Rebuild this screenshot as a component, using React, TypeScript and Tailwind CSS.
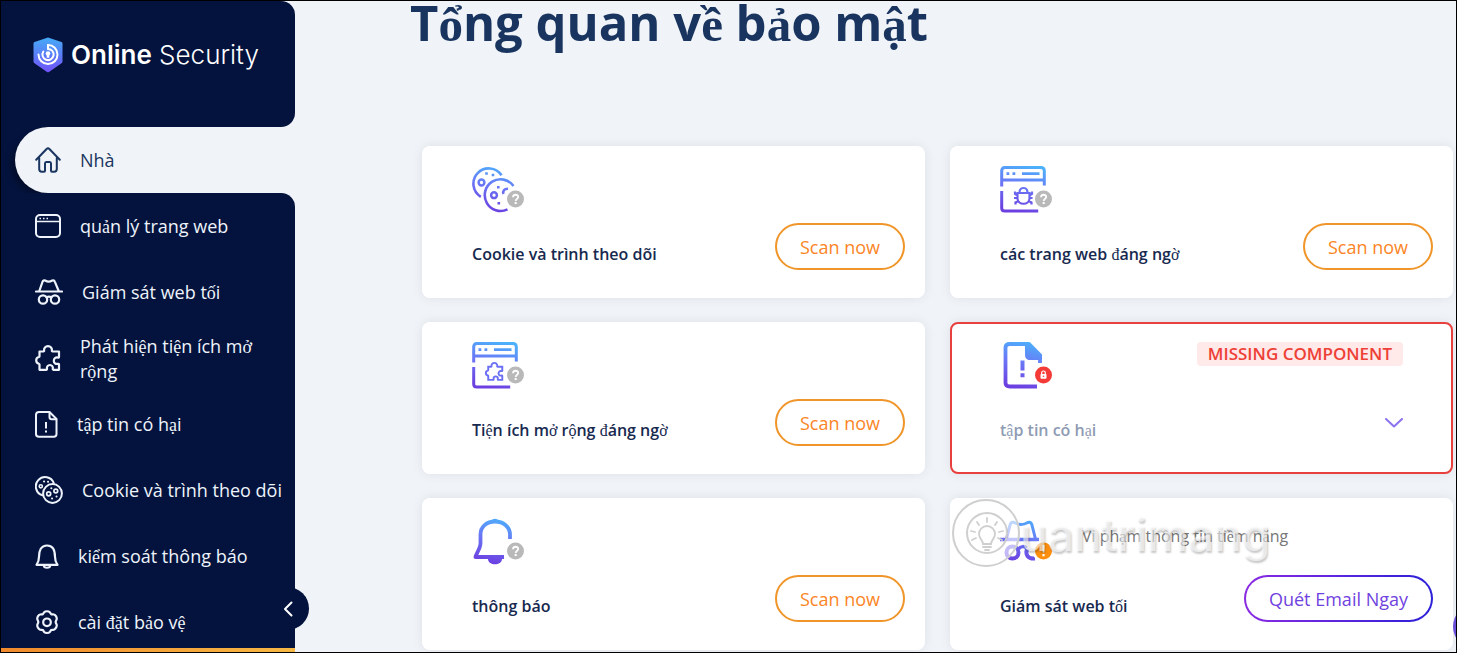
import { Fragment, type ReactNode } from "react";

const SERIF_GLYPHS = /([\u1EA0-\u1EF9đĐơƠưƯăĂ]+)/;

/** Sets the stacked Vietnamese letters in the serif face, the rest in the parent's face. */
function Vi({ children, light = false }: { children: string; light?: boolean }) {
  return (
    <>
      {children.split(SERIF_GLYPHS).map((part, i) =>
        i % 2 === 1 ? (
          <span
            key={i}
            className={
              light
                ? "leading-[0] font-normal font-['Liberation_Serif',serif]"
                : "leading-[0] font-['Liberation_Serif',serif]"
            }
          >
            {part}
          </span>
        ) : (
          <Fragment key={i}>{part}</Fragment>
        ),
      )}
    </>
  );
}

/* ---------- sidebar icons ---------- */

const line = {
  fill: "none",
  stroke: "currentColor",
  strokeWidth: 2,
  strokeLinecap: "round" as const,
  strokeLinejoin: "round" as const,
};

const PUZZLE =
  "M4.5 6.500H8.500c.4 0 .7-.4.6-.9C8.700 3.200 10.500 1.200 13 1.200s4.300 2 3.900 4.400c-.1.500.2.900.6.900h6.500v5.500c0 .5-.4.700-.9.600-2.600-.6-4.300.9-4.300 3.100s1.700 3.700 4.300 3.100c.5-.1.900.1.900.6v5.400h-5.600c-.5 0-.7-.4-.6-.9.5-2.200-.9-3.900-2.900-3.900s-3.400 1.700-2.900 3.900c.1.500-.1.900-.6.900H4.500v-5.300c0-.4-.2-.7-.6-.8C2.200 18.300 1.200 17 1.200 15.300s1-3 2.700-3.300c.4-.1.600-.4.600-.8z";

const HomeIcon = () => (
  <svg width="26" height="26" viewBox="0 0 26 26" {...line} className="shrink-0">
    <path d="M1.200 12.800 11.600 2c.8-.8 2-.8 2.800 0l10.400 10.800M4.200 11v11c0 1.500 1 2.700 2.600 2.700H9c.7 0 1-.4 1-1V16.500c0-1 .4-1.500 1.300-1.500h3.400c.9 0 1.300.5 1.300 1.500v7.200c0 .6.300 1 1 1h2.200c1.600 0 2.600-1.200 2.600-2.700V11" />
  </svg>
);
const WindowIcon = () => (
  <svg width="26" height="24" viewBox="0 0 26 24" {...line} className="shrink-0">
    <rect x="1" y="1" width="24" height="22" rx="4" />
    <path d="M1 7.500h24" strokeWidth="1.500" />
    <path d="M4.500 4.400h1.500M8 4.400h1.500M11.500 4.400H13" strokeWidth="1.500" strokeLinecap="butt" />
  </svg>
);
const SpyIcon = () => (
  <svg width="28" height="26" viewBox="0 0 28 26" {...line} strokeWidth={2.2} className="shrink-0">
    <path d="M1 12.500h26M4.300 12 7.500 2.800c.4-1.200 1.500-1.700 2.700-1.300 2.500 1.600 4.500 1.600 7 0 1.200-.4 2.300.1 2.700 1.300L23.700 12M11.500 18.500c1.500-1 3.500-1 5 0" />
    <circle cx="8" cy="20.500" r="4.200" />
    <circle cx="20" cy="20.500" r="4.200" />
  </svg>
);
const PuzzleIcon = () => (
  <svg width="26" height="27" viewBox="0 0 26 27" {...line} strokeWidth={2.2} className="shrink-0">
    <path d={PUZZLE} />
  </svg>
);
const FileIcon = () => (
  <svg width="23" height="27" viewBox="0 0 23 27" {...line} className="shrink-0">
    <path d="M4 1h10.500L21.500 8v15c0 1.700-1 2.800-2.700 2.800H4c-1.700 0-3-1.100-3-2.800V3.800C1 2.100 2.300 1 4 1z" />
    <path d="M14.500 1.500V6c0 1.500.7 2.200 2.200 2.200h4.500" />
    <path d="M11 11v6.500M11 19.500v2" strokeWidth="2" strokeLinecap="butt" />
  </svg>
);
const CookieIcon = () => (
  <svg width="28" height="28" viewBox="0 0 28 28" {...line} className="shrink-0">
    <path d="M7.500 19.300A9.300 9.300 0 1 1 18.800 7" />
    <circle cx="17.500" cy="17.500" r="9.400" />
    <circle cx="13.700" cy="17.800" r="2" strokeWidth="1.700" />
    <circle cx="20.800" cy="15" r="1.900" strokeWidth="1.700" />
    <circle cx="5.800" cy="10.300" r="1.600" strokeWidth="1.600" />
    <path d="M9 5.500h.1M13 5.800h.1M16.300 12.300h.1M17 22.500h.1M21.500 20.500h.1" />
  </svg>
);
const BellIcon = () => (
  <svg width="24" height="25" viewBox="0 0 24 25" {...line} strokeWidth={2.2} className="shrink-0">
    <path d="M1.500 20.800c2-2.600 2.500-4.800 2.500-8C4 6.500 6 1.500 12 1.500s8 5 8 11.300c0 3.200.5 5.400 2.500 8zM8.800 21.500c.2 3 6.200 3 6.400 0" />
  </svg>
);
const GearIcon = () => (
  <svg width="24" height="25" viewBox="0 0 24 25" {...line} strokeWidth={2.2} className="shrink-0">
    <path d="M9.200 2.200c1.200-1.300 4.400-1.300 5.600 0 .6.700.8 1.600 1.500 2 .8.400 1.700.1 2.600.3 1.700.4 3.200 3 2.800 4.700-.2.900-1 1.500-1 2.800s.8 1.900 1 2.800c.4 1.700-1.100 4.300-2.800 4.900-.9.200-1.800-.1-2.600.3-.7.400-.9 1.300-1.500 2-1.200 1.300-4.400 1.300-5.600 0-.6-.7-.8-1.600-1.500-2-.8-.4-1.700-.1-2.600-.3-1.700-.6-3.200-3.200-2.800-4.900.2-.9 1-1.500 1-2.800s-.8-1.900-1-2.800c-.4-1.700 1.100-4.300 2.800-4.700.9-.2 1.800.1 2.600-.3.700-.4.900-1.300 1.500-2z" />
    <circle cx="12" cy="12.300" r="3.800" />
  </svg>
);

/* ---------- card icons ---------- */

function Gradient({ id }: { id: string }) {
  return (
    <defs>
      <linearGradient id={id} gradientUnits="userSpaceOnUse" x1="30" y1="0" x2="20" y2="46">
        <stop offset="0" stopColor="#4cb0fb" />
        <stop offset="0.45" stopColor="#6a78f6" />
        <stop offset="1" stopColor="#6c3fe0" />
      </linearGradient>
    </defs>
  );
}

function StatusBadge({ kind }: { kind: "unknown" | "locked" | "warning" }) {
  const fill = kind === "unknown" ? "#b9b9b9" : kind === "locked" ? "#f53b37" : "#fd8f0f";
  return (
    <g stroke="none">
      <circle cx="43.500" cy="33" r="11" fill="#fff" />
      <circle cx="43.500" cy="33" r="8.500" fill={fill} />
      {kind === "unknown" && (
        <>
          <path d="M41 31.200c.1-3.300 5.200-3.200 5.200-.2 0 1.900-2.500 1.900-2.500 3.900" fill="none" stroke="#fff" strokeWidth="1.800" />
          <path d="M42.700 36h2v2h-2z" fill="#fff" />
        </>
      )}
      {kind === "locked" && (
        <>
          <rect x="40.500" y="32" width="6" height="4.800" rx=".8" fill="#fff" />
          <path d="M41.700 32v-1.300c0-2.300 3.600-2.300 3.600 0V32" fill="none" stroke="#fff" strokeWidth="1.200" />
          <circle cx="43.500" cy="34.200" r=".8" fill="#f53b37" />
        </>
      )}
      {kind === "warning" && <path d="M42.300 27h2.400l-.4 7.500h-1.600zM42.400 36h2.200v2.200h-2.200z" fill="#fff" />}
    </g>
  );
}

function CardIcon({
  id,
  badge,
  children,
}: {
  id: string;
  badge: "unknown" | "locked" | "warning";
  children: ReactNode;
}) {
  return (
    <svg width="54" height="47" viewBox="0 0 54 47" fill="none" stroke={`url(#${id})`} strokeWidth="3" className="shrink-0">
      <Gradient id={id} />
      {children}
      <StatusBadge kind={badge} />
    </svg>
  );
}

const cookies = (
  <>
    <path d="M8.800 30.800A15.300 15.300 0 1 1 29.500 9.300" strokeWidth="2.600" />
    <path d="M41.500 20A15.800 15.800 0 1 0 35.500 43.300" strokeWidth="2.600" />
    <circle cx="9.500" cy="16.500" r="2.900" strokeWidth="2.500" />
    <circle cx="22" cy="29.200" r="2.900" strokeWidth="2.500" />
    <path d="M31.500 28c-1-3 .8-5.500 4.500-5.300" strokeWidth="2.500" />
    <path d="M13.200 7.500h2.600M19.700 9h2.600M25 21.300h2.600M25.500 37.300h2.600" strokeWidth="2.600" />
  </>
);
const browserFrame = (
  <>
    <path d="M1.700 20.500V5c0-2 1-3.400 3.200-3.400h35.900C43 1.600 44.300 3 44.300 5v14.500M1.700 25v17c0 2 1 3 3 3h33.500" />
    <path d="M2 14h42M6.500 7.700h2.800M12.500 7.700h2.800M22 7.700h17.500" strokeWidth="2.800" />
  </>
);
const bug = (
  <g strokeWidth="2.200">
    <path d="M17.500 27h12v5.500c0 7-12 7-12 0zM19.500 26.500c0-6 8-6 8 0M17.500 29.500l-2.500-1.500v-2.500M17.500 32h-3.500M18.500 35l-3 1.500v2M29.500 29.500l2.500-1.500v-2.500M29.500 32H33M28.500 35l3 1.500v2" />
  </g>
);
const puzzle = (
  <g transform="translate(13 20) scale(.72)">
    <path d={PUZZLE} strokeWidth="2.700" stroke="#6b70f5" />
  </g>
);
const file = (
  <>
    <path d="M37 44.500H10c-3 0-4.500-1-4.500-3.500V5.500C5.500 3 7 2 9.500 2H28l12 12v7" strokeWidth="3.800" />
    <path d="M25 .3h5L42 12.500V18H30c-4 0-5-2.500-5-6z" fill="url(#files)" stroke="none" />
    <path d="M22.500 18.500v10M22.500 31.300v4" strokeWidth="4" />
  </>
);
const bell = (
  <>
    <path d="M38 21v-4.500C38 9 31.500 3.500 23 3.500S8.500 9 8.500 16.500V25c0 5.500-4.500 11-5 14H32" strokeWidth="3.800" strokeLinejoin="round" />
    <path d="M16 41c0 7 14 7 14 0zM20 3c0-3 6-3 6 0z" fill="url(#alerts)" stroke="none" />
  </>
);
const spy = (
  <>
    <path d="M0 21.500h39" strokeWidth="3.500" />
    <path d="M6.500 21 10.200 6.500c.7-2.200 2-2.800 4-2 4 2.500 9.600 2.500 13.600 0 2-.8 3.300-.2 4 2L35.500 21" strokeWidth="3" />
    <path d="M18.500 31c2-3 6-3 8-1" strokeWidth="3.500" />
    <circle cx="12.500" cy="34.500" r="6" strokeWidth="4" />
    <path d="M27 31c-2 6 1 10 8 9.500" strokeWidth="4" />
  </>
);

/* ---------- page parts ---------- */

const navItems: { label: string; icon: ReactNode }[] = [
  { label: "quản lý trang web", icon: <WindowIcon /> },
  { label: "Giám sát web tối", icon: <SpyIcon /> },
  { label: "Phát hiện tiện ích mở rộng", icon: <PuzzleIcon /> },
  { label: "tập tin có hại", icon: <FileIcon /> },
  { label: "Cookie và trình theo dõi", icon: <CookieIcon /> },
  { label: "kiểm soát thông báo", icon: <BellIcon /> },
  { label: "cài đặt bảo vệ", icon: <GearIcon /> },
];

function Brand() {
  return (
    <a
      href="#home"
      className="flex items-center gap-2 text-[26px] leading-8 whitespace-nowrap text-white font-['Inter',sans-serif]"
    >
      <svg width="30" height="36" viewBox="0 0 30 36" className="shrink-0">
        <defs>
          <linearGradient id="shield" x1="0" y1="0" x2="0" y2="1">
            <stop offset="0" stopColor="#45aaf5" />
            <stop offset="1" stopColor="#7152fb" />
          </linearGradient>
        </defs>
        <path d="M15 .5 28.500 5c.6.200 1 .7 1 1.400V24.500c0 .8-.3 1.400-1 1.800L16 35c-.6.400-1.400.4-2 0L1.500 26.300c-.7-.4-1-1-1-1.800V6.400c0-.7.4-1.200 1-1.400z" fill="url(#shield)" />
        <g fill="none" stroke="#fff" strokeWidth="2" strokeLinecap="round">
          <path d="M5.500 17.500a9.500 9.500 0 1 0 9.500-9.500v3.800" />
          <path d="M10.300 14.500A5.600 5.600 0 1 0 15 11.900" />
        </g>
        <circle cx="15" cy="16.500" r="2.300" fill="#fff" />
        <path d="M14 17.500h2l.4 3.200h-2.800z" fill="#fff" />
      </svg>
      <span className="font-light">
        <span className="font-semibold">Online</span> Security
      </span>
    </a>
  );
}

function Sidebar() {
  return (
    <aside className="relative flex w-[294px] shrink-0 flex-col bg-[#f0f4f8] text-lg leading-[25px] text-[#eef3fb]">
      <div className="h-[126px] shrink-0 rounded-r-[14px] bg-[#04133d] px-8 pt-9">
        <Brand />
      </div>
      <nav className="flex grow flex-col">
        <div className="overflow-x-clip bg-[#04133d] pl-[14px]">
          <a
            href="#home"
            aria-current="page"
            className="flex h-[66px] items-center gap-[19px] rounded-l-full bg-[#f0f4f8] pl-5 text-[#1a3560] shadow-[-8px_5px_8px_-6px_rgba(0,0,0,0.45)]"
          >
            <HomeIcon />
            <span className="pt-px">Nhà</span>
          </a>
        </div>
        <ul className="grow rounded-tr-[14px] bg-[#04133d] pl-[34px]">
          {navItems.map((item) => (
            <li key={item.label}>
              <a href="#nav" className="flex h-[66px] items-center gap-[19px]">
                {item.icon}
                <span className="max-w-[202px] pt-px">
                  <Vi>{item.label}</Vi>
                </span>
              </a>
            </li>
          ))}
        </ul>
      </nav>
      <button
        type="button"
        aria-label="Thu gọn"
        className="absolute -right-[14px] bottom-[22px] flex size-[43px] items-center justify-center rounded-full bg-[#04133d] text-white"
      >
        <svg width="10" height="16" viewBox="0 0 10 16" {...line}>
          <path d="M8.500 1.500 2 8l6.500 6.500" />
        </svg>
      </button>
      <div className="absolute inset-x-0 bottom-0 h-1 bg-linear-to-r from-[#f08a2c] to-[#f7b844]" />
    </aside>
  );
}

function ScanButton() {
  return (
    <button
      type="button"
      className="h-[47px] shrink-0 rounded-full border-2 border-[#f0952a] px-[23px] text-lg text-[#fb8526]"
    >
      Scan now
    </button>
  );
}

function Card({
  title,
  icon,
  note,
  action,
  state = "normal",
}: {
  title: string;
  icon: ReactNode;
  note?: ReactNode;
  action: ReactNode;
  state?: "normal" | "error";
}) {
  return (
    <article
      className={
        state === "error"
          ? "relative flex h-[152px] flex-col rounded-lg border-2 border-[#e8403f] bg-white pt-[18px] pr-[18px] pl-12 text-[#8e9bb3] shadow-[0_0_12px_rgba(0,0,0,0.08)]"
          : "relative flex h-[152px] flex-col rounded-lg bg-white pt-5 pr-5 pl-[50px] text-[#17294f] shadow-[0_0_12px_rgba(0,0,0,0.08)]"
      }
    >
      <div className="flex h-[47px] items-start">
        {icon}
        {note}
      </div>
      <div className="mt-[10px] flex h-[47px] items-center justify-between">
        <h2 className="pt-3.5 text-base leading-5 font-semibold">
          <Vi light>{title}</Vi>
        </h2>
        {action}
      </div>
    </article>
  );
}

function Watermark() {
  return (
    <div aria-hidden="true" className="pointer-events-none absolute -top-1 left-0 flex items-center">
      <svg width="70" height="72" viewBox="0 0 70 72" fill="none" className="shrink-0">
        <circle cx="37" cy="35" r="27" stroke="#fff" strokeWidth="12" opacity=".6" />
        <g stroke="#cfcfcf" strokeWidth="2">
          <circle cx="36" cy="35" r="33" />
          <circle cx="37" cy="35" r="20" />
        </g>
        <g stroke="#cfcfcf" strokeWidth="1.800" strokeLinecap="round">
          <path d="M33 46c0-4-4-5-4-10a8 8 0 0 1 16 0c0 5-4 6-4 10zM33 49h8M35 52h4" />
          <path d="M37 20v4M27 24l2 3M47 24l-2 3M21 33l4 1M53 33l-4 1M22 42l4-2M52 42l-4-2" />
        </g>
      </svg>
      <span className="text-[46px] leading-[80px] font-medium text-white/60 font-['Inter',sans-serif] [text-shadow:1px_2px_2px_rgba(0,0,0,0.22)]">
        uantrimang
      </span>
    </div>
  );
}

export default function App() {
  return (
    <div className="flex h-screen overflow-hidden border border-black bg-[#f0f4f8] font-['Open_Sans','Noto_Sans',sans-serif]">
      <Sidebar />
      <main className="relative min-w-0 grow pr-[3px] pl-[127px]">
        <h1 className="-ml-3 h-[145px] text-[49px] leading-[42px] font-bold whitespace-nowrap text-[#19345f]">
          <Vi>Tổng quan về bảo mật</Vi>
        </h1>
        <section className="grid grid-cols-2 gap-x-[25px] gap-y-6">
          <Card
            title="Cookie và trình theo dõi"
            icon={<CardIcon id="trackers" badge="unknown">{cookies}</CardIcon>}
            action={<ScanButton />}
          />
          <Card
            title="các trang web đáng ngờ"
            icon={<CardIcon id="sites" badge="unknown">{browserFrame}{bug}</CardIcon>}
            action={<ScanButton />}
          />
          <Card
            title="Tiện ích mở rộng đáng ngờ"
            icon={<CardIcon id="extensions" badge="unknown">{browserFrame}{puzzle}</CardIcon>}
            action={<ScanButton />}
          />
          <Card
            state="error"
            title="tập tin có hại"
            icon={<CardIcon id="files" badge="locked">{file}</CardIcon>}
            note={
              <span className="mr-[30px] ml-auto rounded-sm bg-[#ffe9e9] px-[11px] text-[17px] leading-6 font-semibold text-[#ee4036]">
                MISSING COMPONENT
              </span>
            }
            action={
              <button type="button" aria-label="Mở rộng" className="mr-[30px] text-[#8c72ee]">
                <svg width="18" height="10" viewBox="0 0 18 10" {...line}>
                  <path d="m1 1 8 7.500L17 1" />
                </svg>
              </button>
            }
          />
          <Card
            title="thông báo"
            icon={<CardIcon id="alerts" badge="unknown">{bell}</CardIcon>}
            action={<ScanButton />}
          />
          <Card
            title="Giám sát web tối"
            icon={<CardIcon id="darkweb" badge="warning">{spy}</CardIcon>}
            note={
              <>
                <p className="pt-[7px] pl-7 text-base leading-[22px] text-[#777]">
                  <Vi>Vi phạm thông tin tiềm năng</Vi>
                </p>
                <Watermark />
              </>
            }
            action={
              <button
                type="button"
                className="h-[47px] shrink-0 rounded-full border-2 border-transparent px-[23px] text-lg text-[#6f42e0] [background:linear-gradient(#fff,#fff)_padding-box,linear-gradient(90deg,#8a2be2,#2b20d8)_border-box]"
              >
                Quét Email Ngay
              </button>
            }
          />
        </section>
        <button
          type="button"
          aria-label="Trợ giúp"
          className="absolute -right-[40px] bottom-1 size-[43px] rounded-full bg-[#6c4fd8]"
        />
      </main>
    </div>
  );
}
